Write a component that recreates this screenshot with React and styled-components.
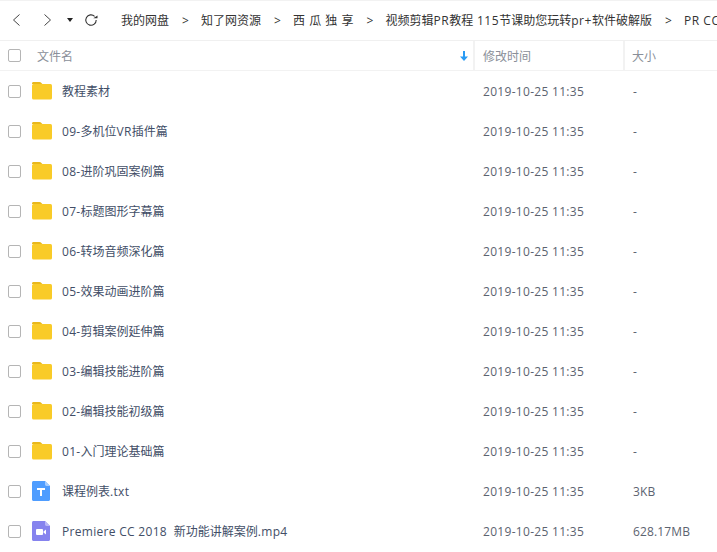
import styled, { createGlobalStyle } from "styled-components";

const GlobalStyle = createGlobalStyle`
  html, body {
    margin: 0;
    padding: 0;
    background: #fff;
    overflow: hidden;
  }
  body {
    font-family: "Open Sans", "Noto Sans CJK SC", sans-serif;
    font-size: 12px;
    color: #424e67;
  }
`;

const crumbs = [
  { text: "我的网盘" },
  { text: "知了网资源" },
  { text: "西 瓜 独 享", spaced: true },
  { text: "视频剪辑PR教程 115节课助您玩转pr+软件破解版" },
  { text: "PR CC 2018" },
];

const files = [
  { name: "教程素材", size: "-" },
  { name: "09-多机位VR插件篇", size: "-" },
  { name: "08-进阶巩固案例篇", size: "-" },
  { name: "07-标题图形字幕篇", size: "-" },
  { name: "06-转场音频深化篇", size: "-" },
  { name: "05-效果动画进阶篇", size: "-" },
  { name: "04-剪辑案例延伸篇", size: "-" },
  { name: "03-编辑技能进阶篇", size: "-" },
  { name: "02-编辑技能初级篇", size: "-" },
  { name: "01-入门理论基础篇", size: "-" },
  { name: "课程例表.txt", size: "3KB", type: "txt" },
  { name: "Premiere CC 2018  新功能讲解案例.mp4", size: "628.17MB", type: "video" },
];

// latin runs are a bit wider in the original font
function MixedText({ text }) {
  return text
    .split(/([\x00-\x7f]+)/)
    .map((part, i) => (i % 2 ? <Latin key={i}>{part}</Latin> : part));
}

function FolderIcon() {
  return (
    <svg width="20" height="18" viewBox="0 0 20 18">
      <path d="M0 1.5C0 .7.6 0 1.4 0h6c.8 0 1.5.3 2 .9l.9 1.1H0z" fill="#e9b81c" />
      <rect x="0" y="2" width="20" height="15.5" rx="1.5" fill="#f9cb28" />
    </svg>
  );
}

function TxtIcon() {
  return (
    <svg width="18" height="20" viewBox="0 0 18 20">
      <path d="M1.5 0H13l5 5v13.5c0 .8-.7 1.5-1.5 1.5h-15C.7 20 0 19.3 0 18.5v-17C0 .7.7 0 1.5 0z" fill="#4f9dff" />
      <path d="M13 0l5 5h-3.6c-.8 0-1.4-.6-1.4-1.4z" fill="#a6cdff" />
      <path d="M5 7h8v2H10v6H8V9H5z" fill="#fff" />
    </svg>
  );
}

function VideoIcon() {
  return (
    <svg width="18" height="20" viewBox="0 0 18 20">
      <path d="M1.5 0H13l5 5v13.5c0 .8-.7 1.5-1.5 1.5h-15C.7 20 0 19.3 0 18.5v-17C0 .7.7 0 1.5 0z" fill="#8683ee" />
      <path d="M13 0l5 5h-3.6c-.8 0-1.4-.6-1.4-1.4z" fill="#bbb9f6" />
      <rect x="4" y="8" width="7" height="6" rx="1" fill="#fff" />
      <path d="M11.5 10.5L14 8.5v5l-2.500-2z" fill="#fff" />
    </svg>
  );
}

function FileIcon({ type }) {
  if (type === "txt") return <TxtIcon />;
  if (type === "video") return <VideoIcon />;
  return <FolderIcon />;
}

export default function App() {
  return (
    <Page>
      <GlobalStyle />
      <Toolbar>
        <NavButtons>
          <NavButton $width={32}>
            <svg width="10" height="14" viewBox="0 0 10 14" fill="none" stroke="#444" strokeWidth="1">
              <path d="M8.500 1.500L2.500 7l6 5.500" />
            </svg>
          </NavButton>
          <NavButton $width={24}>
            <svg width="10" height="14" viewBox="0 0 10 14" fill="none" stroke="#444" strokeWidth="1">
              <path d="M1.500 1.500L7.500 7l-6 5.500" />
            </svg>
          </NavButton>
          <NavButton $width={17}>
            <svg width="6" height="4" viewBox="0 0 6 4">
              <path d="M0 0h6L3 4z" fill="#222" />
            </svg>
          </NavButton>
          <NavButton $width={26}>
            <svg width="14" height="14" viewBox="0 0 14 14" fill="none" stroke="#333" strokeWidth="1.1">
              <path d="M12.200 7a5.200 5.200 0 1 1-1.600-3.700" />
              <path d="M9.300 5.200h4.200V2.500z" fill="#333" stroke="none" />
            </svg>
          </NavButton>
        </NavButtons>
        <Divider />
        <Crumbs>
          {crumbs.map((c, i) => (
            <Crumb key={c.text}>
              {i > 0 && <Sep>&gt;</Sep>}
              <CrumbText $spaced={c.spaced}>
                <MixedText text={c.text} />
              </CrumbText>
            </Crumb>
          ))}
        </Crumbs>
      </Toolbar>
      <HeaderRow>
        <CheckCell>
          <Checkbox />
        </CheckCell>
        <NameHead>
          <span>文件名</span>
          <SortArrow width="8" height="10" viewBox="0 0 8 10">
            <path d="M3 0h2v5.500h3L4 10 0 5.500h3z" fill="#2a9bf4" />
          </SortArrow>
        </NameHead>
        <TimeHead>修改时间</TimeHead>
        <SizeHead>大小</SizeHead>
      </HeaderRow>
      {files.map((f) => (
        <Row key={f.name}>
          <CheckCell>
            <Checkbox />
          </CheckCell>
          <IconCell>
            <FileIcon type={f.type} />
          </IconCell>
          <Name>
            <MixedText text={f.name} />
          </Name>
          <Time>2019-10-25 11:35</Time>
          <Size>{f.size}</Size>
        </Row>
      ))}
    </Page>
  );
}

const Page = styled.div`
  width: 717px;
  height: 552px;
  overflow: hidden;
  background: #fff;
`;

const Latin = styled.span`
  letter-spacing: 0.3px;
`;

const Toolbar = styled.div`
  display: flex;
  align-items: center;
  height: 41px;
  box-sizing: border-box;
  padding-bottom: 1px;
  border-top: 1px solid #f2f2f2;
  border-bottom: 1px solid #f0f0f0;
  white-space: nowrap;
  overflow: hidden;
`;

const NavButtons = styled.div`
  display: flex;
  align-items: center;
  padding-left: 11px;
`;

const NavButton = styled.div`
  display: flex;
  align-items: center;
  justify-content: flex-start;
  width: ${(p) => p.$width}px;
`;

const Divider = styled.div`
  width: 1px;
  height: 16px;
  background: #ddd;
`;

const Crumbs = styled.div`
  display: flex;
  align-items: center;
  margin-left: 11px;
  color: #333;
`;

const Crumb = styled.div`
  display: flex;
  align-items: center;
`;

const Sep = styled.span`
  width: 32px;
  padding-left: 13px;
  box-sizing: border-box;
`;

const CrumbText = styled.span`
  display: block;
  word-spacing: ${(p) => (p.$spaced ? "0.45px" : "0")};

  ${Latin} {
    letter-spacing: 0.55px;
  }
`;

const HeaderRow = styled.div`
  display: flex;
  align-items: center;
  height: 30px;
  box-sizing: border-box;
  border-bottom: 1px solid #f2f2f2;
  color: #8a8f99;
`;

const CheckCell = styled.div`
  width: 37px;
  flex: none;
  padding-left: 8px;
  box-sizing: border-box;
  display: flex;
  align-items: center;
`;

const Checkbox = styled.div`
  width: 13px;
  height: 13px;
  box-sizing: border-box;
  border: 1px solid #b5b5b5;
  border-radius: 2px;
  background: #fff;
`;

const NameHead = styled.div`
  width: 438px;
  height: 100%;
  box-sizing: border-box;
  flex: none;
  display: flex;
  align-items: center;
  justify-content: space-between;
  padding-right: 5px;
  border-right: 2px solid #f2f2f2;
`;

const SortArrow = styled.svg`
  display: block;
`;

const TimeHead = styled.div`
  width: 150px;
  height: 100%;
  box-sizing: border-box;
  flex: none;
  display: flex;
  align-items: center;
  padding-left: 8px;
  border-right: 2px solid #f2f2f2;
`;

const SizeHead = styled.div`
  padding-left: 7px;
`;

const Row = styled.div`
  display: flex;
  align-items: center;
  height: 40px;
`;

const IconCell = styled.div`
  width: 25px;
  flex: none;
  display: flex;
  align-items: center;
  margin-left: -5px;
  margin-right: 5px;
`;

const Name = styled.div`
  width: 421px;
  flex: none;
  white-space: pre;
`;

const Time = styled.div`
  width: 150px;
  flex: none;
  color: #5c6370;
  letter-spacing: 0.3px;
`;

const Size = styled.div`
  color: #5c6370;
  letter-spacing: 0.15px;
`;
